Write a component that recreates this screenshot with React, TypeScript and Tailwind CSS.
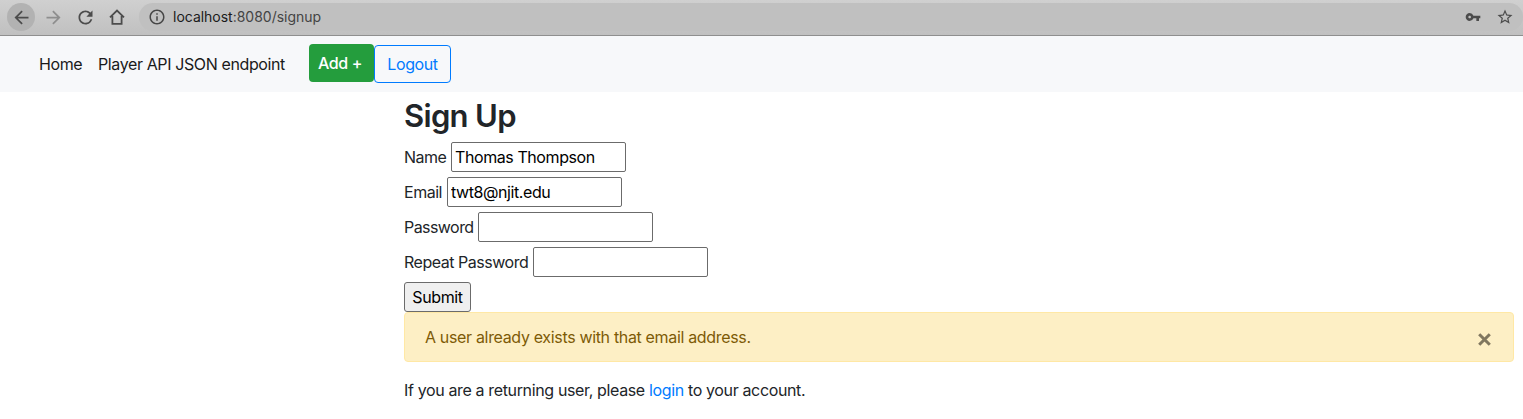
import { MdArrowBack, MdArrowForward, MdInfoOutline, MdRefresh, MdStarBorder, MdVpnKey } from "react-icons/md";

function HomeIcon() {
  return (
    <svg width="16" height="16" viewBox="0 0 16 16" fill="none" stroke="#4c4c4c" strokeWidth="1.8">
      <path d="M1 8.3 8 1.5l7 6.8M3.4 7v7.8h9.2V7" />
    </svg>
  );
}

function BrowserBar() {
  return (
    <div className="flex h-9 items-start border-b border-[#8f8f8f] bg-gradient-to-b from-[#d0d0d0] to-[#c0c0c0] pt-[3px] pl-[7px] text-[#4c4c4c]">
      <div className="flex h-7 w-7 items-center justify-center rounded-full bg-[#b2b2b2]">
        <MdArrowBack size={21} />
      </div>
      <div className="ml-1 flex h-7 w-7 items-center justify-center text-[#8e8e8e]">
        <MdArrowForward size={21} />
      </div>
      <div className="ml-1 flex h-7 w-7 items-center justify-center">
        <MdRefresh size={21} />
      </div>
      <div className="ml-1 flex h-7 w-7 items-center justify-center">
        <HomeIcon />
      </div>
      <div className="ml-2 flex h-7 flex-1 items-center rounded-full bg-[#c0c0c0] pr-[9px] pl-[9px]">
        <MdInfoOutline size={18} color="#474747" />
        <span className="ml-[7px] text-[14px] leading-5 tracking-[-0.001em] text-[#444444]">
          <span className="text-[#1b1b1b]">localhost</span>:8080/signup
        </span>
        <MdVpnKey size={16} className="ml-auto" />
        <MdStarBorder size={18} className="ml-[15px]" />
      </div>
    </div>
  );
}

function Navbar() {
  return (
    <nav className="flex h-14 items-center bg-[#f7f8fa] pl-[39px] text-[#1a1a1a]">
      <a className="w-[59px]">Home</a>
      <a className="w-[211px]">Player API JSON endpoint</a>
      <button className="mb-[2px] h-[38px] w-[65px] rounded bg-[#249d3d] pr-[3px] font-medium text-white">Add +</button>
      <button className="h-[38px] w-[77px] rounded border border-[#007bff] text-[#007bff]">Logout</button>
    </nav>
  );
}

type FieldProps = {
  label: string;
  labelClass: string;
  type?: string;
  value?: string;
};

function Field({ label, labelClass, type = "text", value }: FieldProps) {
  return (
    <label className="mb-[5px] flex h-[30px] items-center whitespace-nowrap">
      <span className={labelClass}>{label}</span>
      <input
        type={type}
        defaultValue={value}
        className="h-[30px] w-[175px] shrink-0 rounded-[2px] border border-[#6b6b6b] bg-white px-[3px] tracking-[-0.026em] text-black outline-none"
      />
    </label>
  );
}

export default function App() {
  return (
    <div className="h-[419px] overflow-hidden bg-white font-['Inter','Liberation_Sans',sans-serif] text-[16px] leading-6 tracking-[-0.024em] text-[#212529]">
      <BrowserBar />
      <Navbar />
      <main className="pr-[9px] pl-[404px]">
        <h2 className="h-[50px] pt-[5px] text-[31px] leading-[38px] font-semibold tracking-[-0.022em]">Sign Up</h2>
        <form>
          <Field label="Name" labelClass="w-[47px] tracking-[-0.03em]" value="Thomas Thompson" />
          <Field label="Email" labelClass="w-[43px] tracking-[-0.03em]" value="twt8@njit.edu" />
          <Field label="Password" labelClass="w-[74px] tracking-[-0.035em]" type="password" />
          <Field label="Repeat Password" labelClass="w-[129px] tracking-[-0.03em]" type="password" />
          <button type="button" className="block h-[30px] w-[67px] rounded-[3px] border border-[#6b6b6b] bg-[#efefef] text-black">
            Submit
          </button>
        </form>
        <div className="flex h-[50px] items-center justify-between rounded border border-[#ffe8a5] bg-[#fdefc5] pr-[22px] pl-5 tracking-[-0.021em] text-[#7d5b07]">
          <span>A user already exists with that email address.</span>
          <svg width="13" height="13" viewBox="0 0 13 13" className="mt-1" stroke="#80775f" strokeWidth="3">
            <path d="m1.2 1.2 10.6 10.6M11.8 1.2 1.2 11.8" />
          </svg>
        </div>
        <p className="mt-4 tracking-[-0.0225em]">
          If you are a returning user, please <a className="text-[#007bff]">login</a> to your account.
        </p>
      </main>
    </div>
  );
}
